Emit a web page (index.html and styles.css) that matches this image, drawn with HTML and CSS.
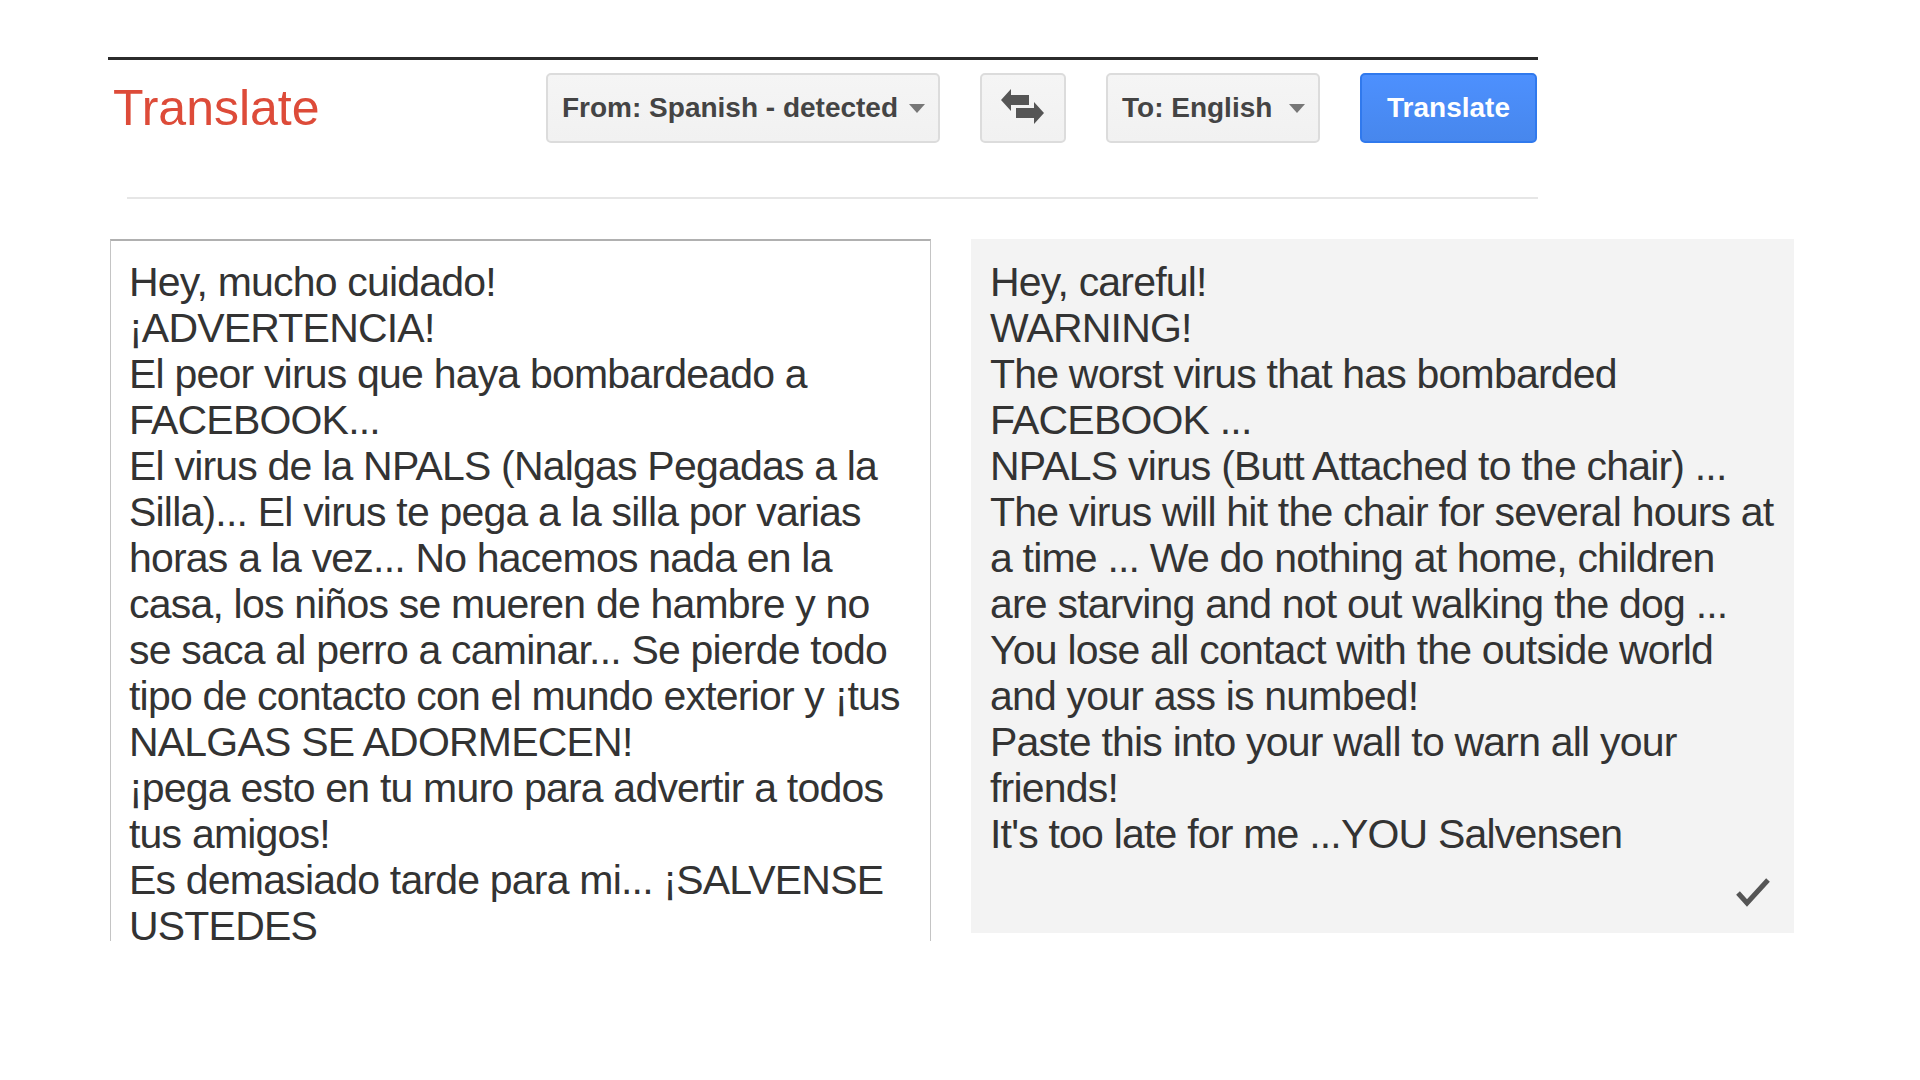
FILE: index.html
```html
<!DOCTYPE html>
<html lang="en">
<head>
  <meta charset="UTF-8" />
  <meta name="viewport" content="width=device-width, initial-scale=1.0"/>
  <title>Translate</title>
  <link rel="stylesheet" href="styles.css">
</head>
<body>

  <div class="app">
    <div class="rule"></div>

    <!-- Toolbar -->
    <div class="toolbar">
      <h1 class="title">Translate</h1>
      <button class="btn select from">From: Spanish - detected <span class="caret"></span></button>
      <button class="btn swap" title="Swap languages">
        <svg width="46" height="40" viewBox="0 0 46 40">
          <polygon points="1,12 11,1 11,7 29,7 29,17 11,17 11,23" fill="#555"/>
          <polygon points="16,20 34,20 34,14 44,25 34,36 34,30 16,30" fill="#555"/>
        </svg>
      </button>
      <button class="btn select to">To: English <span class="caret"></span></button>
      <button class="btn primary">Translate</button>
    </div>

    <div class="divider"></div>

    <!-- Source / result -->
    <div class="panels">
      <div class="source">Hey, mucho cuidado!
¡ADVERTENCIA!
El peor virus que haya bombardeado a FACEBOOK...
El virus de la NPALS (Nalgas Pegadas a la Silla)... El virus te pega a la silla por varias horas a la vez... No hacemos nada en la casa, los niños se mueren de hambre y no se saca al perro a caminar... Se pierde todo tipo de contacto con el mundo exterior y ¡tus NALGAS SE ADORMECEN!
¡pega esto en tu muro para advertir a todos tus amigos!
Es demasiado tarde para mi... ¡SALVENSE USTEDES</div>

      <div class="result">
        <div class="result-text">Hey, careful!
WARNING!
The worst virus that has bombarded FACEBOOK ...
NPALS virus (Butt Attached to the chair) ...
The virus will hit the chair for several hours at a time ... We do nothing at home, children are starving and not out walking the dog ...
You lose all contact with the outside world and your ass is numbed!
Paste this into your wall to warn all your friends!
It's too late for me ...YOU Salvensen</div>
        <svg class="check" width="38" height="32" viewBox="0 0 38 32">
          <polyline points="4,17 13,27 34,4" fill="none" stroke="#555" stroke-width="5"/>
        </svg>
      </div>
    </div>
  </div>

</body>
</html>
```

FILE: styles.css
```css
:root {
  --red: #dd4b39;
  --blue: #4d90fe;
  --text: #333;
  --btn-text: #444;
}

body {
  margin: 0;
  font-family: 'Liberation Sans', Arial, sans-serif;
  background-color: #fff;
  color: var(--text);
}

.app {
  padding: 57px 0 0 108px;
}

.rule {
  width: 1430px;
  border-top: 3px solid #2b2b2b;
}

/* Toolbar */
.toolbar {
  display: flex;
  align-items: center;
  gap: 40px;
  margin-top: 13px;
  padding-left: 5px;
  height: 70px;
}

.title {
  width: 393px;
  margin: 0;
  font-size: 50px;
  font-weight: normal;
  color: var(--red);
}

.btn {
  box-sizing: border-box;
  height: 70px;
  border: 2px solid #dcdcdc;
  border-radius: 5px;
  background: linear-gradient(#f5f5f5, #f1f1f1);
  color: var(--btn-text);
  font-family: inherit;
  font-size: 28px;
  font-weight: bold;
  cursor: pointer;
}

.select {
  display: flex;
  align-items: center;
  justify-content: space-between;
  padding: 0 13px 0 14px;
}

.from {
  width: 394px;
}

.to {
  width: 214px;
}

.caret {
  width: 0;
  height: 0;
  border-left: 8px solid transparent;
  border-right: 8px solid transparent;
  border-top: 9px solid #777;
}

.swap {
  width: 86px;
  display: flex;
  align-items: center;
  justify-content: center;
  padding: 0;
}

.primary {
  width: 177px;
  background: linear-gradient(#4d90fe, #4787ed);
  border-color: #3079ed;
  color: #fff;
}

.divider {
  width: 1411px;
  margin: 54px 0 0 19px;
  border-top: 2px solid #e6e6e6;
}

/* Panels */
.panels {
  display: flex;
  align-items: flex-start;
  gap: 40px;
  margin: 40px 0 0 2px;
}

.source,
.result-text {
  font-size: 41px;
  letter-spacing: -0.8px;
  line-height: 46px;
  white-space: pre-line;
}

.source {
  box-sizing: border-box;
  width: 821px;
  height: 702px;
  overflow: hidden;
  padding: 18px 18px 0 18px;
  border-top: 2px solid #b0b0b0;
  border-left: 1px solid #c4c4c4;
  border-right: 1px solid #c4c4c4;
}

.result {
  box-sizing: border-box;
  width: 823px;
  height: 694px;
  padding: 20px 15px 0 19px;
  background-color: #f3f3f3;
  display: flex;
  flex-direction: column;
}

.check {
  margin-top: auto;
  margin-bottom: 25px;
  align-self: flex-end;
  margin-right: 7px;
}
```
